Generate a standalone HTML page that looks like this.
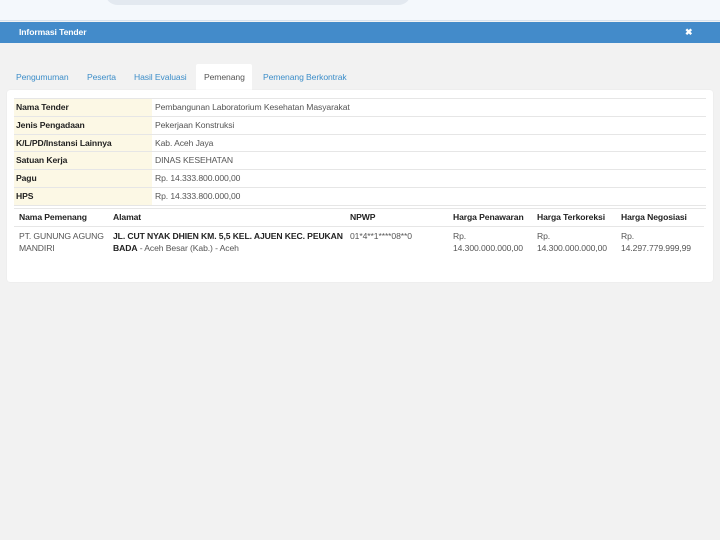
<!DOCTYPE html>
<html><head><style>
*{margin:0;padding:0;box-sizing:border-box}
body{width:720px;height:540px;background:#f2f2f2;font-family:"Liberation Sans",sans-serif;font-size:8.6px;color:#555;position:relative;overflow:hidden;letter-spacing:-0.1px}
.a{position:absolute;white-space:nowrap}
.top{position:absolute;left:0;top:0;width:720px;height:21px;background:#f4f8fc;border-bottom:1px solid #d6e2ef}
.pill{position:absolute;left:105px;top:-20px;width:306px;height:25px;border-radius:14px;background:#e3e9f0}
.bar{position:absolute;left:0;top:22px;width:720px;height:21px;background:#438bca}
.panel{position:absolute;left:7px;top:90px;width:706px;height:192px;background:#fff;border-radius:3px;box-shadow:0 0 1px #ddd}
.tab{color:#3d8ec9}
.row{position:absolute;left:14px;width:692px;height:18px;border-top:1px solid #e6e6e6}
.lab{position:absolute;left:0;top:0;width:138px;height:17px;background:#fcf8e5;color:#222;font-weight:bold;padding:3px 2px}
.val{position:absolute;left:141px;top:3px;color:#555}
b{color:#222}
</style></head><body>
<div class="top"><div class="pill"></div></div>
<div class="bar"><span class="a" style="left:19px;top:5px;color:#fff;font-weight:bold">Informasi Tender</span><span class="a" style="left:685px;top:5px;color:#fff;font-weight:bold;font-size:9px">✖</span></div>
<div class="a" style="left:196px;top:64px;width:56px;height:27px;background:#fff;border-radius:2px 2px 0 0"></div>
<span class="a tab" style="left:16px;top:72px">Pengumuman</span>
<span class="a tab" style="left:87px;top:72px">Peserta</span>
<span class="a tab" style="left:134px;top:72px">Hasil Evaluasi</span>
<span class="a" style="left:204px;top:72px;color:#555">Pemenang</span>
<span class="a tab" style="left:263px;top:72px">Pemenang Berkontrak</span>
<div class="panel"></div>
<div class="row" style="top:98px"><div class="lab">Nama Tender</div><span class="val a">Pembangunan Laboratorium Kesehatan Masyarakat</span></div>
<div class="row" style="top:116px"><div class="lab">Jenis Pengadaan</div><span class="val a">Pekerjaan Konstruksi</span></div>
<div class="row" style="top:134px"><div class="lab">K/L/PD/Instansi Lainnya</div><span class="val a">Kab. Aceh Jaya</span></div>
<div class="row" style="top:151px"><div class="lab">Satuan Kerja</div><span class="val a">DINAS KESEHATAN</span></div>
<div class="row" style="top:169px"><div class="lab">Pagu</div><span class="val a">Rp. 14.333.800.000,00</span></div>
<div class="row" style="top:187px"><div class="lab">HPS</div><span class="val a">Rp. 14.333.800.000,00</span></div>
<div class="a" style="left:14px;top:205px;width:692px;border-top:1px solid #e6e6e6"></div>
<div class="a" style="left:14px;top:208px;width:692px;border-top:1px solid #e6e6e6"></div>
<div class="a" style="left:14px;top:226px;width:690px;border-top:1px solid #e6e6e6"></div>
<span class="a" style="left:19px;top:212px"><b>Nama Pemenang</b></span>
<span class="a" style="left:113px;top:212px"><b>Alamat</b></span>
<span class="a" style="left:350px;top:212px"><b>NPWP</b></span>
<span class="a" style="left:453px;top:212px"><b>Harga Penawaran</b></span>
<span class="a" style="left:537px;top:212px"><b>Harga Terkoreksi</b></span>
<span class="a" style="left:621px;top:212px"><b>Harga Negosiasi</b></span>
<div class="a" style="left:19px;top:230px;line-height:12px">PT. GUNUNG AGUNG<br>MANDIRI</div>
<div class="a" style="left:113px;top:230px;line-height:12px"><b>JL. CUT NYAK DHIEN KM. 5,5 KEL. AJUEN KEC. PEUKAN</b><br><b>BADA</b> - Aceh Besar (Kab.) - Aceh</div>
<div class="a" style="left:350px;top:230px;line-height:12px">01*4**1****08**0</div>
<div class="a" style="left:453px;top:230px;line-height:12px">Rp.<br>14.300.000.000,00</div>
<div class="a" style="left:537px;top:230px;line-height:12px">Rp.<br>14.300.000.000,00</div>
<div class="a" style="left:621px;top:230px;line-height:12px">Rp.<br>14.297.779.999,99</div>
</body></html>
